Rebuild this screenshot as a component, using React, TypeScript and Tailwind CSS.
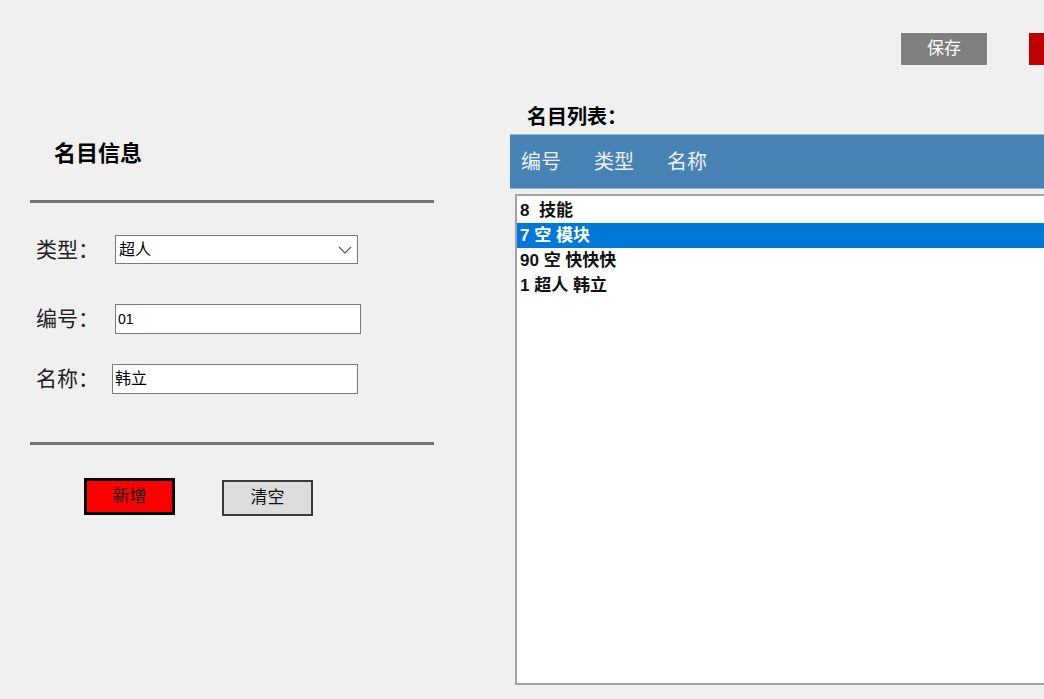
import React from 'react';

const font = { fontFamily: '"Liberation Sans", "Noto Sans CJK SC", sans-serif' };

const listItems = [
  { text: '8  技能', selected: false },
  { text: '7 空 模块', selected: true },
  { text: '90 空 快快快', selected: false },
  { text: '1 超人 韩立', selected: false },
];

const App: React.FC = () => {
  return (
    <div className="w-[1044px] h-[699px] overflow-hidden bg-[#f0f0f0] text-black" style={font}>
      {/* top toolbar */}
      <div className="flex gap-[40px] pt-[32px] pl-[900px] h-[66px]">
        <button className="w-[88px] h-[34px] shrink-0 bg-[#808080] border border-[#f8f8f8] text-white text-[17px]">
          保存
        </button>
        <button className="w-[88px] h-[34px] shrink-0 bg-[#c00000] border border-[#f8f8f8]" aria-label="删除" />
      </div>

      <div className="flex">
        {/* left: form */}
        <div className="w-[480px] shrink-0 ml-[30px]">
          <div className="mt-[73px] ml-[24px] text-[22px] font-bold leading-[30px]">名目信息</div>
          <div className="mt-[31px] w-[404px] h-[3px] bg-[#747474]" />

          <div className="mt-[32px] flex items-center h-[29px]">
            <span className="ml-[6px] w-[79px] text-[21px] text-[#222]">类型：</span>
            <div className="w-[243px] h-[29px] bg-white border border-[#7a7a7a] flex items-center justify-between pl-[3px] pr-[5px]">
              <span className="text-[16px]">超人</span>
              <svg width="14" height="8" viewBox="0 0 14 8" fill="none">
                <path d="M1 1l6 6 6-6" stroke="#555" strokeWidth="1.2" />
              </svg>
            </div>
          </div>

          <div className="mt-[40px] flex items-center h-[30px]">
            <span className="ml-[6px] w-[79px] text-[21px] text-[#222]">编号：</span>
            <div className="w-[246px] h-[30px] bg-white border border-[#7a7a7a] flex items-center pl-[2px]">
              <span className="text-[14px]">01</span>
            </div>
          </div>

          <div className="mt-[30px] flex items-center h-[30px]">
            <span className="ml-[6px] w-[76px] text-[21px] text-[#222]">名称：</span>
            <div className="w-[246px] h-[30px] bg-white border border-[#7a7a7a] flex items-center pl-[2px]">
              <span className="text-[16px]">韩立</span>
            </div>
          </div>

          <div className="mt-[48px] w-[404px] h-[3px] bg-[#747474]" />

          <div className="mt-[33px] ml-[54px] flex items-start gap-[47px]">
            <button className="w-[91px] h-[37px] bg-[#ff0000] border-[3px] border-black text-[17px] text-[#111]">
              新增
            </button>
            <button className="mt-[2px] w-[91px] h-[36px] bg-[#dddddd] border-2 border-[#3a3a3a] text-[17px] text-[#111]">
              清空
            </button>
          </div>
        </div>

        {/* right: list */}
        <div className="flex-1 min-w-[560px]">
          <div className="mt-[38px] pl-[17px] text-[20px] font-bold leading-[26px]">名目列表：</div>
          <div className="mt-[4px] h-[55px] bg-[#4682b4] border-t border-[#9bbad6] border-b border-b-[#8fb4d8] flex items-center pl-[11px] gap-[33px] text-[20px] text-[#f0f0f0]">
            <span>编号</span>
            <span>类型</span>
            <span>名称</span>
          </div>
          <div className="mt-[5px] ml-[5px] h-[491px] bg-white border-2 border-[#a0a4a8] pt-[2px]">
            {listItems.map((item) => (
              <div
                key={item.text}
                className={`h-[25px] flex items-center pl-[3px] text-[17px] font-bold whitespace-pre ${
                  item.selected ? 'bg-[#0078d7] text-white' : 'text-[#111]'
                }`}
              >
                {item.text}
              </div>
            ))}
          </div>
        </div>
      </div>
    </div>
  );
};

export default App;
